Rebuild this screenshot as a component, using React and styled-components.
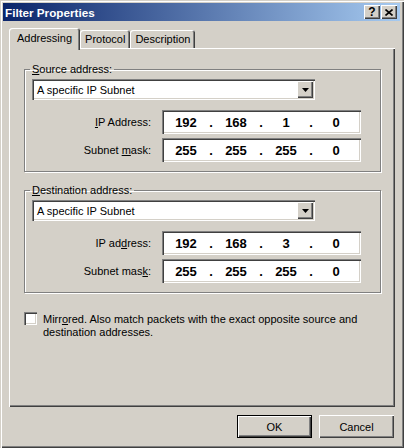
import React from "react";
import styled, { createGlobalStyle } from "styled-components";

const GlobalStyle = createGlobalStyle`
  html, body {
    margin: 0;
    padding: 0;
    background: #d4d0c8;
  }
  body {
    font-family: "Liberation Sans", Arial, sans-serif;
    font-size: 11px;
    color: #000;
  }
`;

const raised = `
  box-shadow: inset 1px 1px 0 #fff, inset -1px -1px 0 #404040,
    inset -2px -2px 0 #808080;
`;

const sunken = `
  box-shadow: inset 1px 1px 0 #808080, inset 2px 2px 0 #404040,
    inset -1px -1px 0 #fff, inset -2px -2px 0 #d4d0c8;
`;

function App() {
  return (
    <>
      <GlobalStyle />
      <Window>
        <TitleBar>
          <Title>Filter Properties</Title>
          <TitleButtons>
            <CaptionButton>?</CaptionButton>
            <CaptionButton>
              <svg width="8" height="7" viewBox="0 0 8 7">
                <path d="M0.5 0.5 L7.5 6.5 M7.5 0.5 L0.5 6.5" stroke="#000" strokeWidth="1.6" />
              </svg>
            </CaptionButton>
          </TitleButtons>
        </TitleBar>

        <Body>
          <TabStrip>
            <Tab $active>Addressing</Tab>
            <Tab>Protocol</Tab>
            <Tab>Description</Tab>
          </TabStrip>

          <Panel>
            <AddressGroup
              legend={<><u>S</u>ource address:</>}
              ip={["192", "168", "1", "0"]}
              ipLabel={<><u>I</u>P Address:</>}
              maskLabel={<>Subnet <u>m</u>ask:</>}
            />
            <AddressGroup
              spaced
              legend={<><u>D</u>estination address:</>}
              ip={["192", "168", "3", "0"]}
              ipLabel={<>IP ad<u>d</u>ress:</>}
              maskLabel={<>Subnet mas<u>k</u>:</>}
            />

            <CheckRow>
              <CheckBox />
              <CheckText>
                <Line>
                  Mirr<u>o</u>red. Also match packets with the exact opposite source and
                </Line>
                <Line>destination addresses.</Line>
              </CheckText>
            </CheckRow>
          </Panel>

          <ButtonRow>
            <DialogButton $default>OK</DialogButton>
            <DialogButton>Cancel</DialogButton>
          </ButtonRow>
        </Body>
      </Window>
    </>
  );
}

function AddressGroup(props) {
  return (
    <Group $spaced={props.spaced}>
      <Legend>{props.legend}</Legend>
      <Combo>
        <ComboText>A specific IP Subnet</ComboText>
        <DropButton>
          <svg width="7" height="4" viewBox="0 0 7 4">
            <polygon points="0,0 7,0 3.5,4" fill="#000" />
          </svg>
        </DropButton>
      </Combo>
      <FieldGrid>
        <FieldLabel>{props.ipLabel}</FieldLabel>
        <IpField octets={props.ip} />
        <FieldLabel>{props.maskLabel}</FieldLabel>
        <IpField octets={["255", "255", "255", "0"]} />
      </FieldGrid>
    </Group>
  );
}

function IpField({ octets }) {
  return (
    <IpBox>
      {octets.map((o, i) => (
        <React.Fragment key={i}>
          {i > 0 && <Dot>.</Dot>}
          <Octet>{o}</Octet>
        </React.Fragment>
      ))}
    </IpBox>
  );
}

const Window = styled.div`
  width: 404px;
  height: 448px;
  box-sizing: border-box;
  padding: 3px 4px 4px 3px;
  display: flex;
  flex-direction: column;
  background: #d4d0c8;
  box-shadow: inset 1px 1px 0 #d4d0c8, inset 2px 2px 0 #fff,
    inset -1px -1px 0 #404040, inset -2px -2px 0 #808080;
`;

const TitleBar = styled.div`
  height: 18px;
  display: flex;
  align-items: center;
  justify-content: space-between;
  padding: 0 3px 0 2px;
  background: linear-gradient(to right, #0a246a, #a6caf0);
`;

const Title = styled.span`
  color: #fff;
  font-weight: bold;
  font-size: 11.7px;
`;

const TitleButtons = styled.div`
  display: flex;
  gap: 1px;
`;

const CaptionButton = styled.div`
  width: 16px;
  height: 14px;
  box-sizing: border-box;
  display: flex;
  align-items: center;
  justify-content: center;
  background: #d4d0c8;
  font-weight: bold;
  font-size: 12px;
  ${raised}
`;

const Body = styled.div`
  flex: 1;
  display: flex;
  flex-direction: column;
  padding: 7px 5px 0 6px;
`;

const TabStrip = styled.div`
  display: flex;
  align-items: flex-end;
  height: 20px;
`;

const Tab = styled.div`
  position: relative;
  z-index: ${(p) => (p.$active ? 1 : 0)};
  height: ${(p) => (p.$active ? 22 : 18)}px;
  margin-bottom: ${(p) => (p.$active ? -2 : 0)}px;
  padding: 0 ${(p) => (p.$active ? 8 : 5)}px ${(p) => (p.$active ? 3 : 0)}px;
  box-sizing: border-box;
  display: flex;
  align-items: center;
  background: #d4d0c8;
  border-radius: 3px 3px 0 0;
  font-size: 11px;
  box-shadow: inset 1px 1px 0 #fff, inset -1px 0 0 #404040,
    inset -2px 0 0 #808080;
`;

const Panel = styled.div`
  flex: 1;
  display: flex;
  flex-direction: column;
  padding: 15px 13px 0 15px;
  box-shadow: inset 1px 1px 0 #fff, inset -1px -1px 0 #404040,
    inset -2px -2px 0 #808080;
`;

const Group = styled.fieldset`
  margin: ${(p) => (p.$spaced ? 12 : 0)}px 1px 0 0;
  padding: 0 17px 9px 7px;
  border: 1px solid #808080;
  box-shadow: 1px 1px 0 #fff, inset 1px 1px 0 #fff;
`;

const Legend = styled.legend`
  padding: 0 2px;
  margin-left: -2px;
  line-height: 13px;
  font-size: 11px;
`;

const Combo = styled.div`
  margin-top: 3px;
  width: 283px;
  height: 21px;
  box-sizing: border-box;
  padding: 2px;
  display: flex;
  align-items: center;
  background: #fff;
  ${sunken}
`;

const ComboText = styled.span`
  flex: 1;
  padding-left: 3px;
  font-size: 11px;
`;

const DropButton = styled.div`
  width: 16px;
  height: 17px;
  box-sizing: border-box;
  display: flex;
  align-items: center;
  justify-content: center;
  background: #d4d0c8;
  ${raised}
`;

const FieldGrid = styled.div`
  display: grid;
  grid-template-columns: 119px 199px;
  column-gap: 11px;
  row-gap: 4px;
  margin-top: 10px;
`;

const FieldLabel = styled.div`
  align-self: center;
  text-align: right;
  font-size: 11px;
`;

const IpBox = styled.div`
  height: 24px;
  box-sizing: border-box;
  padding: 2px 2px 2px 5px;
  display: grid;
  grid-template-columns: 38px 12px 38px 12px 38px 12px 38px;
  align-items: center;
  background: #fff;
  font-weight: bold;
  font-size: 13px;
  ${sunken}
`;

const Octet = styled.span`
  text-align: center;
`;

const Dot = styled.span`
  text-align: center;
`;

const CheckRow = styled.div`
  display: flex;
  align-items: flex-start;
  gap: 6px;
  margin-top: 19px;
`;

const CheckBox = styled.div`
  flex: none;
  width: 13px;
  height: 13px;
  box-sizing: border-box;
  background: #fff;
  ${sunken}
`;

const CheckText = styled.div`
  display: flex;
  flex-direction: column;
  line-height: 13px;
  font-size: 11px;
  padding-top: 1px;
`;

const Line = styled.div`
  white-space: nowrap;
`;

const ButtonRow = styled.div`
  display: flex;
  justify-content: flex-end;
  gap: 7px;
  padding: 8px 1px 6px 0;
`;

const DialogButton = styled.button`
  width: 75px;
  height: 23px;
  box-sizing: border-box;
  margin: 0;
  padding: 0;
  background: #d4d0c8;
  font-family: "Liberation Sans", Arial, sans-serif;
  font-size: 11px;
  color: #000;
  border: ${(p) => (p.$default ? "1px solid #000" : "none")};
  ${raised}
`;

export default App;
